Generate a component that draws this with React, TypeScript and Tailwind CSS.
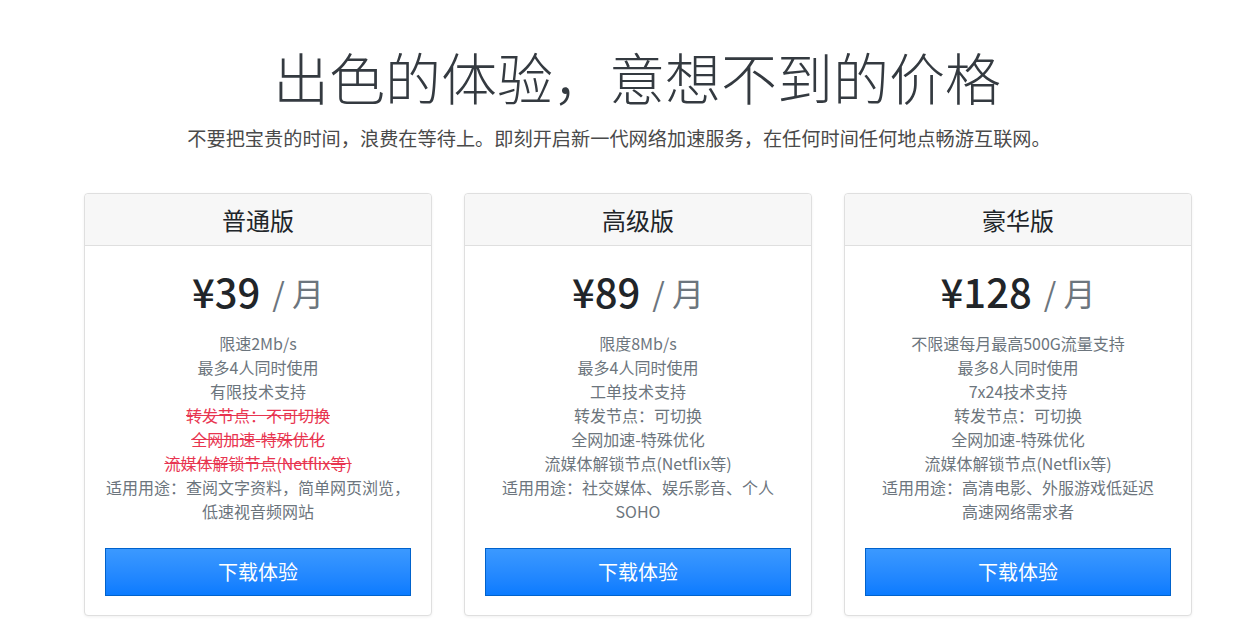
const font = "font-['Microsoft_YaHei','Noto_Sans_CJK_SC','Liberation_Sans',sans-serif]";

type Feature = { text: string; off?: boolean };

const plans: { name: string; price: string; features: Feature[] }[] = [
  {
    name: "普通版",
    price: "¥39",
    features: [
      { text: "限速2Mb/s" },
      { text: "最多4人同时使用" },
      { text: "有限技术支持" },
      { text: "转发节点：不可切换", off: true },
      { text: "全网加速-特殊优化", off: true },
      { text: "流媒体解锁节点(Netflix等)", off: true },
      { text: "适用用途：查阅文字资料，简单网页浏览，" },
      { text: "低速视音频网站" },
    ],
  },
  {
    name: "高级版",
    price: "¥89",
    features: [
      { text: "限度8Mb/s" },
      { text: "最多4人同时使用" },
      { text: "工单技术支持" },
      { text: "转发节点：可切换" },
      { text: "全网加速-特殊优化" },
      { text: "流媒体解锁节点(Netflix等)" },
      { text: "适用用途：社交媒体、娱乐影音、个人" },
      { text: "SOHO" },
    ],
  },
  {
    name: "豪华版",
    price: "¥128",
    features: [
      { text: "不限速每月最高500G流量支持" },
      { text: "最多8人同时使用" },
      { text: "7x24技术支持" },
      { text: "转发节点：可切换" },
      { text: "全网加速-特殊优化" },
      { text: "流媒体解锁节点(Netflix等)" },
      { text: "适用用途：高清电影、外服游戏低延迟" },
      { text: "高速网络需求者" },
    ],
  },
];

export default function App() {
  return (
    <div className={`${font} w-[1238px] h-[638px] bg-white overflow-hidden text-[#212529]`}>
      <div className="pt-[40px] text-center">
        <h1 className="pl-[36px] text-[56px] leading-[72px] font-light text-[#343a40]">出色的体验，意想不到的价格</h1>
        <p className="mt-[12px] text-[19.2px] leading-[28px] text-[#4a4a4a]">
          不要把宝贵的时间，浪费在等待上。即刻开启新一代网络加速服务，在任何时间任何地点畅游互联网。
        </p>
      </div>

      <div className="mt-[41px] flex justify-center gap-[32px] pl-[38px]">
        {plans.map((plan) => (
          <div
            key={plan.name}
            className="w-[348px] rounded-[4px] border border-[#dfdfdf] bg-white shadow-[0_1px_3px_rgba(0,0,0,0.06)] flex flex-col"
          >
            <div className="h-[52px] flex items-center justify-center bg-[#f7f7f7] border-b border-[#dfdfdf] rounded-t-[4px]">
              <h4 className="text-[24px] leading-[30px] text-[#212529]">{plan.name}</h4>
            </div>
            <div className="px-[20px] pt-[22px] pb-[19px] text-center">
              <div className="h-[46px] flex items-end justify-center">
                <span className="text-[40px] leading-[46px] font-medium text-[#212529]">{plan.price}</span>
                <span className="ml-[12px] text-[32px] leading-[44px] text-[#6c757d]">/ 月</span>
              </div>
              <ul className="mt-[17px] text-[16px] leading-[24px] text-[#6c757d]">
                {plan.features.map((f, i) => (
                  <li key={i} className={f.off ? "line-through text-[#e83550] decoration-[#e83550]" : ""}>
                    {f.text}
                  </li>
                ))}
              </ul>
              <button className="mt-[25px] w-full h-[48px] border border-[#0062cc] bg-gradient-to-b from-[#3b99ff] to-[#0a7bff] text-white text-[20px]">
                下载体验
              </button>
            </div>
          </div>
        ))}
      </div>
    </div>
  );
}
